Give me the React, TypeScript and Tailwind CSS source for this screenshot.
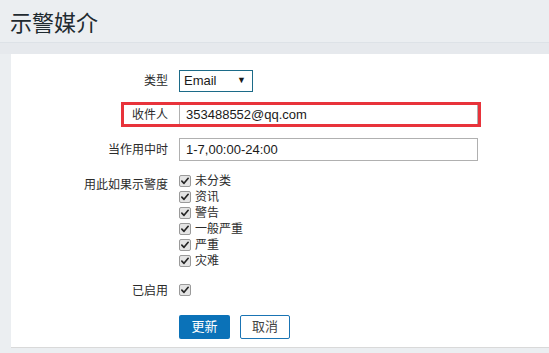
import React from 'react'

const cjk = { fontFamily: '"Liberation Sans", "Noto Sans CJK SC", sans-serif' }

function Check() {
  return (
    <span className="inline-flex h-[12px] w-[12px] shrink-0 items-center justify-center rounded-[2px] border border-[#9a9a9a] bg-[#e4e4e4]">
      <svg viewBox="0 0 12 12" className="h-[10px] w-[10px]">
        <path d="M2.2 6.2 L4.8 8.8 L9.8 2.8" fill="none" stroke="#262626" strokeWidth="2" strokeLinecap="round" strokeLinejoin="round" />
      </svg>
    </span>
  )
}

const levels = ['未分类', '资讯', '警告', '一般严重', '严重', '灾难']

export default function App() {
  return (
    <div className="h-[353px] w-[549px] overflow-hidden bg-[#ebeef1] text-[12px] text-[#2b2b2b]" style={cjk}>
      {/* Header */}
      <div className="h-[43px] border-b border-[#dde2e7] pl-[10px] pt-[10px]">
        <h1 className="text-[22px] leading-[28px] text-[#1f2a30]">示警媒介</h1>
      </div>
      <div className="h-[11px] bg-[#e6e9ed]" />

      {/* Panel */}
      <div className="relative ml-[11px] h-[294px] border-b border-[#d9d9d9] bg-white pt-[16px]">
        <div className="flex flex-col">
          {/* type */}
          <div className="flex h-[22px] items-center">
            <div className="w-[158px] pr-[1px] text-right">类型</div>
            <div className="ml-[10px] flex h-[22px] w-[74px] items-center justify-between border border-[#1c6b88] pl-[4px] pr-[6px] text-[13px] text-[#1a1a1a]">
              <span>Email</span>
              <span className="text-[9px]">▼</span>
            </div>
          </div>

          {/* recipient */}
          <div className="relative mt-[12px] flex h-[22px] items-center">
            <div className="w-[158px] pr-[1px] text-right">收件人</div>
            <div className="ml-[10px] flex h-[22px] w-[299px] items-center border border-[#b0b0b0] pl-[6px] text-[13px] text-[#1a1a1a]">
              353488552@qq.com
            </div>
            <div className="absolute left-[110px] top-[-2px] h-[25px] w-[360px] border-[3px] border-[#e8333b]" />
          </div>

          {/* period */}
          <div className="mt-[12px] flex h-[23px] items-center">
            <div className="w-[158px] pr-[1px] text-right">当作用中时</div>
            <div className="ml-[10px] flex h-[23px] w-[299px] items-center border border-[#b0b0b0] pl-[6px] text-[13px] text-[#1a1a1a]">
              1-7,00:00-24:00
            </div>
          </div>

          {/* severity */}
          <div className="mt-[12px] flex">
            <div className="w-[158px] pr-[1px] pt-[4px] text-right leading-[16px]">用此如果示警度</div>
            <div className="ml-[10px] flex flex-col">
              {levels.map((l) => (
                <label key={l} className="flex h-[16px] items-center gap-[4px]">
                  <Check />
                  <span className="leading-[16px]">{l}</span>
                </label>
              ))}
            </div>
          </div>

          {/* enabled */}
          <div className="mt-[14px] flex h-[16px] items-center">
            <div className="w-[158px] pr-[1px] text-right">已启用</div>
            <div className="ml-[10px]">
              <Check />
            </div>
          </div>

          {/* buttons */}
          <div className="mt-[16px] flex pl-[168px]">
            <button className="h-[24px] w-[51px] rounded-[2px] bg-[#0b72b8] text-[13px] text-white">更新</button>
            <button className="ml-[10px] h-[24px] w-[50px] rounded-[2px] border border-[#1a74b4] bg-white text-[13px] text-[#444]">取消</button>
          </div>
        </div>
      </div>
    </div>
  )
}
